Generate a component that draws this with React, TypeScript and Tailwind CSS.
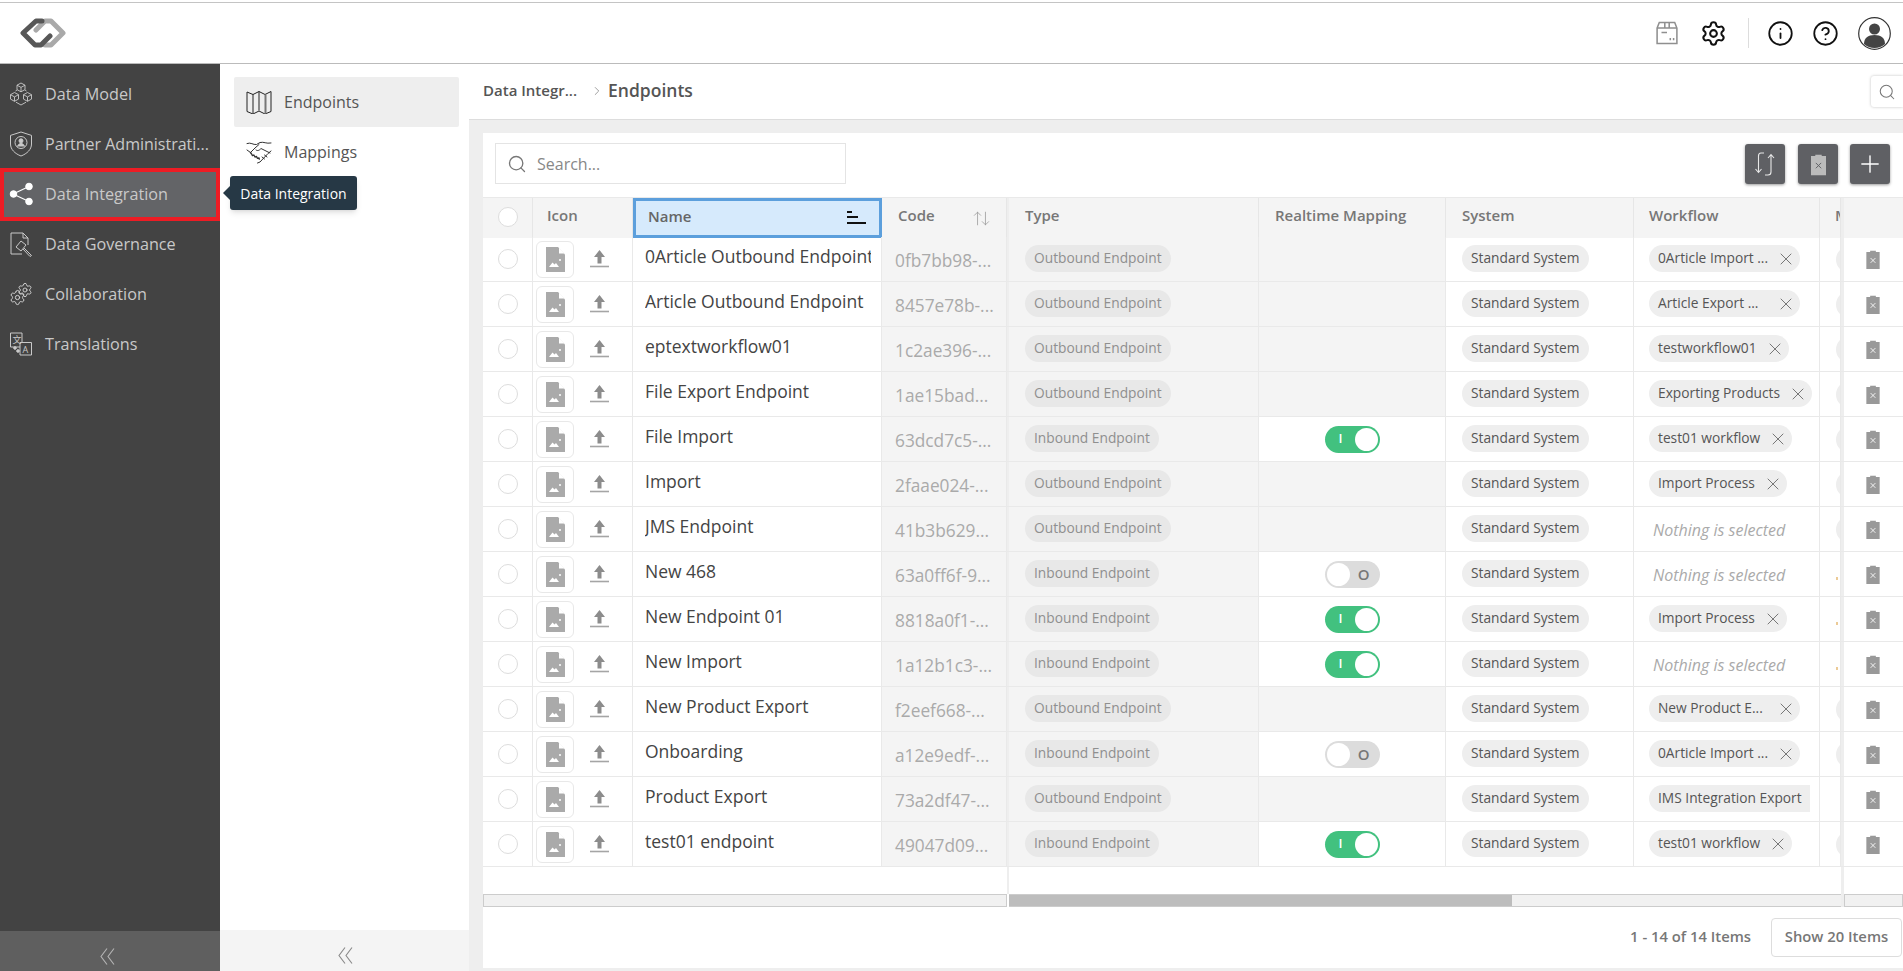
import { ArrowUpDown, ChevronRight, CircleHelp, Info, Plus, Search, Settings, X } from "lucide-react";

interface Row {
  name: string;
  code: string;
  inbound: boolean;
  toggle?: boolean;
  workflow: string | null;
  edge: "chip" | "mark" | "none";
}

const rows: Row[] = [
  { name: "0Article Outbound Endpoint", code: "0fb7bb98-...", inbound: false, workflow: "0Article Import ...", edge: "chip" },
  { name: "Article Outbound Endpoint", code: "8457e78b-...", inbound: false, workflow: "Article Export ...", edge: "chip" },
  { name: "eptextworkflow01", code: "1c2ae396-...", inbound: false, workflow: "testworkflow01", edge: "chip" },
  { name: "File Export Endpoint", code: "1ae15bad...", inbound: false, workflow: "Exporting Products", edge: "chip" },
  { name: "File Import", code: "63dcd7c5-...", inbound: true, toggle: true, workflow: "test01 workflow", edge: "chip" },
  { name: "Import", code: "2faae024-...", inbound: false, workflow: "Import Process", edge: "chip" },
  { name: "JMS Endpoint", code: "41b3b629...", inbound: false, workflow: null, edge: "chip" },
  { name: "New 468", code: "63a0ff6f-9...", inbound: true, toggle: false, workflow: null, edge: "mark" },
  { name: "New Endpoint 01", code: "8818a0f1-...", inbound: true, toggle: true, workflow: "Import Process", edge: "mark" },
  { name: "New Import", code: "1a12b1c3-...", inbound: true, toggle: true, workflow: null, edge: "mark" },
  { name: "New Product Export", code: "f2eef668-...", inbound: false, workflow: "New Product E...", edge: "chip" },
  { name: "Onboarding", code: "a12e9edf-...", inbound: true, toggle: false, workflow: "0Article Import ...", edge: "chip" },
  { name: "Product Export", code: "73a2df47-...", inbound: false, workflow: "IMS Integration Export", edge: "none" },
  { name: "test01 endpoint", code: "49047d09...", inbound: true, toggle: true, workflow: "test01 workflow", edge: "chip" },
];

function Logo() {
  return (
    <svg width="46" height="32" viewBox="0 0 46 32" fill="none" strokeWidth="5" strokeLinejoin="round" strokeLinecap="round">
      <path d="M16 13L25 4h6l12 12-12 12h-6" stroke="#a9a9a9" />
      <path d="M22 4h-6L3 16l12 12h6l9-9" stroke="#575757" />
    </svg>
  );
}

function CubesIcon() {
  return (
    <svg width="24" height="24" viewBox="0 0 24 24" fill="none" stroke="#c9c9c9" strokeWidth="0.9" strokeLinejoin="round">
      <path d="M12 1l4 2.200v4.400l-4 2.200-4-2.200V3.200zM8 3.200l4 2.200 4-2.200M12 5.400v4.400" />
      <path d="M5.500 10.500l4 2.200v4.400l-4 2.200-4-2.200v-4.400zM1.500 12.700l4 2.200 4-2.200M5.500 14.900v4.400" />
      <path d="M18.500 10.500l4 2.200v4.400l-4 2.200-4-2.200v-4.400zM14.500 12.700l4 2.200 4-2.200M18.500 14.900v4.400" />
      <path d="M7 20.200l5 2.800 5-2.800M6.500 9l1.500-1M17.500 9l-1.500-1" />
    </svg>
  );
}

function ShieldIcon() {
  return (
    <svg width="24" height="26" viewBox="0 0 24 26" fill="none" stroke="#c9c9c9" strokeWidth="1">
      <path d="M12 1l10.500 3.400v8.600c0 5.500-4.500 9.700-10.500 12-6-2.300-10.500-6.500-10.500-12V4.400z" />
      <circle cx="12" cy="11.500" r="6" />
      <circle cx="12" cy="9.800" r="2" fill="#c9c9c9" />
      <path d="M8.500 15.500c.5-2 2-3 3.500-3s3 1 3.500 3" fill="#c9c9c9" />
    </svg>
  );
}

function ShareIcon() {
  return (
    <svg width="24" height="24" viewBox="0 0 24 24" fill="#ffffff" stroke="#ffffff">
      <path d="M4 12L20 4.500M4 12l16 7.500" fill="none" strokeWidth="1.200" />
      <circle cx="4.500" cy="12" r="3.300" />
      <circle cx="20" cy="4.500" r="3.300" />
      <circle cx="20" cy="19.500" r="3.300" />
    </svg>
  );
}

function GavelDocIcon() {
  return (
    <svg width="24" height="25" viewBox="0 0 24 25" fill="none" stroke="#c9c9c9" strokeWidth="1">
      <path d="M13 22H2V1h12l5 5v7M14 1v5h5" />
      <path d="M7 15l5-6 5 4-5 6zM15 16l7.500 7.500-1.500 1-7-7.500" />
    </svg>
  );
}

function GearsIcon() {
  return (
    <div className="relative h-[24px] w-[24px] text-[#d2d2d2]">
      <Settings className="absolute bottom-0 left-0 h-[17px] w-[17px]" strokeWidth={1.4} />
      <Settings className="absolute right-0 top-0 h-[16px] w-[16px]" strokeWidth={1.4} />
    </div>
  );
}

function TranslateIcon() {
  return (
    <svg width="24" height="24" viewBox="0 0 24 24" fill="none" stroke="#c9c9c9" strokeWidth="1">
      <path d="M12 15H1.500V1H13v9" />
      <path d="M11 10.500h11.500V23H11z" fill="#434343" />
      <text x="3.500" y="11" fontSize="9" fill="#c9c9c9" stroke="none" fontFamily="'Noto Sans CJK SC', sans-serif">文</text>
      <text x="13.500" y="20.500" fontSize="9" fill="#c9c9c9" stroke="none" fontFamily="'Open Sans', sans-serif">A</text>
      <circle cx="6" cy="16" r="1.300" fill="#c9c9c9" />
      <circle cx="9" cy="19" r="1.300" fill="#c9c9c9" />
    </svg>
  );
}

function FoldedMapIcon() {
  return (
    <svg width="26" height="24" viewBox="0 0 26 24" fill="none" stroke="#222222" strokeWidth="1">
      <path d="M1 2l6 2.500 6-3 6 3 6-3v20l-6 2.500-6-3-6 3-6-2.500z" />
      <path d="M7 4.500v19M13 1.500v19" />
      <path d="M19.500 4.500v19" stroke="#777777" strokeWidth="2" />
    </svg>
  );
}

function HandshakeIcon() {
  return (
    <svg width="26" height="23" viewBox="0 0 26 23" fill="none" stroke="#333333" strokeWidth="1" strokeLinejoin="round" strokeLinecap="round">
      <path d="M1 2.500C5 1 7 4 10.500 3.500L14 1.500c4-1 6 1.500 11 .5" />
      <path d="M1 9l3.500 2.500L9 7l4-3.500M10 9c2 1.500 3.500 0 5-1.500L24 12" />
      <path d="M25 10l-3 2.500-8 8.500-2.500 1" />
      <path d="M4.500 11.500l2 3 1.500-.5 1 2 1.500-.5 1 2 1.500-.5.500 2" strokeDasharray="2 1" strokeWidth="1.400" />
      <path d="M16 16l2.500 2M18.500 14l2.500 2" />
    </svg>
  );
}

function FileImageIcon() {
  return (
    <svg width="19" height="25" viewBox="0 0 19 25" fill="#aaaaaa">
      <path d="M0 0h12l7 7.500V25H0z" />
      <path d="M13 0.500l5.500 6H13z" fill="#ffffff" />
      <path d="M3 20l3.500-4.500 2 2 1.500-1.500 3 4z" fill="#ffffff" />
      <circle cx="14" cy="13" r="1" fill="#ffffff" />
    </svg>
  );
}

function UploadIcon() {
  return (
    <svg width="19" height="18" viewBox="0 0 19 18">
      <path d="M9.500 0l5.500 7H11.500v6.500h-4V7H4z" fill="#8c8c8c" />
      <path d="M0 16.500h19" stroke="#a5a5a5" strokeWidth="1.600" />
    </svg>
  );
}

function TrashIcon({ className, x = "#ffffff" }: { className?: string; x?: string }) {
  return (
    <svg className={className} viewBox="0 0 14 20" fill="currentColor">
      <path d="M4 2V.8h6V2h4v18H0V2z" />
      <path d="M4.500 8.500l5 5m0-5l-5 5" stroke={x} strokeWidth="0.9" fill="none" />
    </svg>
  );
}

function SortIcon() {
  return (
    <svg width="19" height="14" viewBox="0 0 19 14" fill="#111111">
      <rect x="0" y="0" width="5" height="2" />
      <rect x="0" y="5" width="11" height="2" />
      <rect x="0" y="11" width="19" height="2" />
    </svg>
  );
}

function DoubleChevron({ color }: { color: string }) {
  return (
    <svg width="17" height="17" viewBox="0 0 17 17" fill="none" stroke={color} strokeWidth="1.100">
      <path d="M8 .5L2 8.500l6 8M15 .5L9 8.500l6 8" />
    </svg>
  );
}

function Toggle({ on }: { on: boolean }) {
  if (on) {
    return (
      <div className="flex h-[27px] w-[55px] items-center justify-between rounded-full bg-[#42c17f] pl-[14px] pr-[2px] text-[13px] font-semibold text-white">
        <span>I</span>
        <span className="h-[23px] w-[23px] rounded-full bg-white" />
      </div>
    );
  }
  return (
    <div className="flex h-[27px] w-[55px] items-center justify-between rounded-full bg-[#dcdcdc] pl-[2px] pr-[10px] text-[15px] font-semibold text-[#777777]">
      <span className="h-[23px] w-[23px] rounded-full bg-white" />
      <span>O</span>
    </div>
  );
}

const cols = "grid grid-cols-[50px_100px_249px_125px_2px_250px_187px_188px_186px_21px_3px_1fr]";

function TableHead() {
  const head = "flex h-full items-center border-r border-[#e6e6e6] bg-[#f4f4f4] text-[15px] font-semibold text-[#777777]";
  const label = "pb-[5px]";
  return (
    <div className={`${cols} h-[40px] border-y border-[#e9e9e9]`}>
      <div className={`${head} pl-[15px]`}>
        <span className="mb-[3px] h-[20px] w-[20px] rounded-full border border-[#dddddd] bg-white" />
      </div>
      <div className={`${head} pl-[14px]`}><span className={label}>Icon</span></div>
      <div className="flex h-[40px] items-center justify-between border-[3px] border-[#5c9fdc] bg-[#d6eafc] pl-[12px] pr-[13px] text-[15px] font-semibold text-[#666666]">
        <span className="pb-[4px]">Name</span>
        <SortIcon />
      </div>
      <div className={`${head} justify-between pl-[16px] pr-[15px]`}>
        <span className={label}>Code</span>
        <ArrowUpDown className="h-[19px] w-[19px] text-[#999999]" strokeWidth={1} />
      </div>
      <div className="bg-[#eeeeee]" />
      <div className={`${head} pl-[16px]`}><span className={label}>Type</span></div>
      <div className={`${head} pl-[16px]`}><span className={label}>Realtime Mapping</span></div>
      <div className={`${head} pl-[16px]`}><span className={label}>System</span></div>
      <div className={`${head} pl-[15px]`}><span className={label}>Workflow</span></div>
      <div className={`${head} overflow-hidden pl-[15px]`}><span className={label}>M</span></div>
      <div className="bg-[#eeeeee]" />
      <div className="bg-[#f4f4f4]" />
    </div>
  );
}

function WorkflowCell({ row }: { row: Row }) {
  if (!row.workflow) {
    return <span className="mt-[3px] pl-[4px] text-[16px] italic text-[#aaaaaa]">Nothing is selected</span>;
  }
  if (row.edge === "none") {
    return (
      <span className="flex h-[27px] w-[161px] items-center overflow-hidden whitespace-nowrap rounded-l-full bg-[#eeeeee] pl-[9px] text-[13.75px] text-[#555555]">
        {row.workflow}
      </span>
    );
  }
  return (
    <span className="flex h-[27px] items-center gap-[8px] whitespace-nowrap rounded-full bg-[#eeeeee] pl-[9px] pr-[4px] text-[13.75px] text-[#555555]">
      <span className={row.workflow.endsWith("...") ? "w-[110px]" : ""}>{row.workflow}</span>
      <X className="h-[20px] w-[20px] text-[#777777]" strokeWidth={1.2} />
    </span>
  );
}

function TableRow({ row }: { row: Row }) {
  const cell = "flex h-full min-w-0 items-center border-r border-[#e9e9e9]";
  return (
    <div className={`${cols} h-[45px] border-b border-[#e9e9e9]`}>
      <div className={`${cell} pl-[15px]`}>
        <span className="h-[20px] w-[20px] rounded-full border border-[#dddddd] bg-white" />
      </div>
      <div className={`${cell} pl-[3px]`}>
        <div className="flex h-[37px] w-[38px] items-center justify-center rounded-md border border-[#e8e8e8]">
          <FileImageIcon />
        </div>
        <div className="ml-[16px]">
          <UploadIcon />
        </div>
      </div>
      <div className={`${cell} pb-[5px] pl-[12px]`}>
        <span className="w-[226px] overflow-hidden whitespace-nowrap text-[17.5px] text-[#444444]">{row.name}</span>
      </div>
      <div className={`${cell} bg-[#f4f4f4] pl-[13px] pt-[4px] text-[17.3px] text-[#aaaaaa]`}>{row.code}</div>
      <div className="bg-[#eeeeee]" />
      <div className={`${cell} bg-[#f4f4f4] pb-px pl-[16px]`}>
        <span className="flex h-[27px] items-center whitespace-nowrap rounded-full bg-[#e8e8e8] px-[9px] text-[13.75px] text-[#8f8f8f]">
          {row.inbound ? "Inbound Endpoint" : "Outbound Endpoint"}
        </span>
      </div>
      <div className={`${cell} justify-center ${row.inbound ? "bg-white" : "bg-[#f4f4f4]"}`}>
        {row.inbound && <Toggle on={!!row.toggle} />}
      </div>
      <div className={`${cell} pb-px pl-[16px]`}>
        <span className="flex h-[27px] items-center whitespace-nowrap rounded-full bg-[#eeeeee] px-[9px] text-[13.75px] text-[#555555]">
          Standard System
        </span>
      </div>
      <div className={`${cell} pb-px pl-[15px]`}>
        <WorkflowCell row={row} />
      </div>
      <div className={`${cell} overflow-hidden pl-[16px]`}>
        {row.edge === "chip" && <span className="h-[27px] w-[20px] shrink-0 rounded-l-full bg-[#eeeeee]" />}
        {row.edge === "mark" && <span className="mt-[8px] h-[3px] w-[2px] shrink-0 bg-[#eccb97]" />}
      </div>
      <div className="bg-[#eeeeee]" />
      <div className="flex h-full items-center pl-[22px]">
        <TrashIcon className="h-[19px] w-[14px] text-[#999999]" />
      </div>
    </div>
  );
}

export default function App() {
  const lowerItems = [
    { label: "Data Governance", icon: <GavelDocIcon /> },
    { label: "Collaboration", icon: <GearsIcon /> },
    { label: "Translations", icon: <TranslateIcon /> },
  ];

  return (
    <div className="flex h-screen w-full flex-col overflow-hidden bg-white font-['Open_Sans',sans-serif]">
      <div className="h-[2px] bg-white" />
      <header className="flex h-[62px] shrink-0 items-center justify-between border-y border-t-[#c4c4c4] border-b-[#bbbbbb] pl-[20px] pr-[12px]">
        <Logo />
        <div className="flex items-center">
          <svg width="22" height="24" viewBox="0 0 20 21" fill="none" stroke="#8f8f8f" strokeWidth="1.400">
            <path d="M1 6l2-5h14l2 5v14H1zM1 6h18M8 1v5M12 1v5M5 10h5" />
            <path d="M13 15v2M16 15v2" />
          </svg>
          <Settings className="ml-[22px] h-[27px] w-[27px] text-[#111111]" strokeWidth={1.8} />
          <div className="ml-[21px] h-[30px] w-px bg-[#dddddd]" />
          <Info className="ml-[18px] h-[27px] w-[27px] text-[#111111]" strokeWidth={1.6} />
          <CircleHelp className="ml-[18px] h-[27px] w-[27px] text-[#111111]" strokeWidth={1.6} />
          <svg className="ml-[19px]" width="33" height="33" viewBox="0 0 33 33">
            <circle cx="16.500" cy="16.500" r="15.800" fill="none" stroke="#333333" strokeWidth="1.200" />
            <circle cx="16.500" cy="12" r="5.500" fill="#444444" />
            <path d="M6 27c0-6 4-9 10.500-9S27 21 27 27c-3 2.500-6.500 4-10.500 4S9 29.500 6 27z" fill="#444444" />
          </svg>
        </div>
      </header>

      <div className="flex min-h-0 flex-1">
        <aside className="flex w-[220px] shrink-0 flex-col justify-between bg-[#434343]">
          <nav className="pt-[5px] text-[16.2px] text-[#c9c9c9]">
            <div className="flex h-[50px] items-center gap-[12px] pl-[9px]">
              <CubesIcon />
              Data Model
            </div>
            <div className="flex h-[50px] items-center gap-[12px] whitespace-nowrap pl-[9px] text-[16px]">
              <ShieldIcon />
              Partner Administrati...
            </div>
            <div className="relative flex h-[50px] items-center gap-[12px] bg-[#636467] pl-[9px]">
              <ShareIcon />
              Data Integration
              <div className="absolute -top-px left-0 h-[53px] w-full border-4 border-[#ed1c24]" />
              <div className="absolute left-[230px] top-[7px] z-10 flex h-[34px] w-[127px] items-center justify-center rounded-[3px] bg-[#263845] text-[14px] font-medium text-white shadow-md">
                <span className="absolute -left-[7px] top-[10px] h-0 w-0 border-y-[7px] border-r-[7px] border-y-transparent border-r-[#263845]" />
                Data Integration
              </div>
            </div>
            {lowerItems.map((item) => (
              <div key={item.label} className="flex h-[50px] items-center gap-[12px] pl-[9px]">
                {item.icon}
                {item.label}
              </div>
            ))}
          </nav>
          <div className="flex h-[40px] items-center justify-center bg-[#5f5f5f] pr-[5px] pt-[10px]">
            <DoubleChevron color="#b5b5b5" />
          </div>
        </aside>

        <aside className="flex w-[249px] shrink-0 flex-col justify-between bg-white">
          <div className="px-[14px] pt-[13px] text-[16px] text-[#555555]">
            <div className="flex h-[50px] w-[225px] items-center gap-[12px] rounded-[2px] bg-[#eeeeee] pl-[12px]">
              <FoldedMapIcon />
              Endpoints
            </div>
            <div className="flex h-[50px] items-center gap-[12px] pl-[12px]">
              <HandshakeIcon />
              Mappings
            </div>
          </div>
          <div className="flex h-[41px] items-center justify-center bg-[#f4f4f4] pl-[2px] pt-[10px]">
            <DoubleChevron color="#888888" />
          </div>
        </aside>

        <main className="flex min-w-0 flex-1 flex-col bg-[#eeeeee]">
          <div className="flex h-[56px] shrink-0 items-center justify-between border-b border-[#dddddd] bg-white pl-[14px]">
            <div className="flex items-center pb-[2px] text-[#555555]">
              <span className="text-[15px] font-semibold">Data Integr...</span>
              <ChevronRight className="ml-[13px] h-[14px] w-[14px] text-[#777777]" strokeWidth={1.2} />
              <span className="ml-[4px] text-[17.5px] font-semibold">Endpoints</span>
            </div>
            <div className="flex h-[31px] w-[32px] items-center justify-center rounded-l-[3px] bg-white shadow-[0_0_3px_rgba(0,0,0,0.25)]">
              <Search className="h-[18px] w-[18px] text-[#777777]" strokeWidth={1.4} />
            </div>
          </div>

          <div className="mb-[3px] ml-[14px] mt-[13px] flex min-h-0 flex-1 flex-col bg-white">
            <div className="flex h-[64px] shrink-0 items-start justify-between pl-[12px] pr-[13px] pt-[10px]">
              <div className="flex h-[41px] w-[351px] items-center gap-[10px] border border-[#e4e4e4] pl-[11px] text-[16px] text-[#888888]">
                <Search className="h-[20px] w-[20px] text-[#777777]" strokeWidth={1.6} />
                Search...
              </div>
              <div className="flex pt-px">
                <div className="flex h-[40px] w-[40px] items-center justify-center rounded-[3px] bg-[#5f6064] shadow-[0_1px_3px_rgba(0,0,0,0.4)]">
                  <svg width="20" height="26" viewBox="0 0 20 26" fill="none" stroke="#e8e8e8" strokeWidth="1.100">
                    <path d="M9 2H6C4 2 3.500 3.500 3.500 5v16M.5 18l3 3.500 3-3.500" />
                    <path d="M16 7l-3-3.500L10 7M13 3.500V21c0 1.500-1 3-3 3H7" transform="translate(3 0)" />
                  </svg>
                </div>
                <div className="ml-[13px] flex h-[40px] w-[40px] items-center justify-center rounded-[3px] bg-[#5f6064] shadow-[0_1px_3px_rgba(0,0,0,0.4)]">
                  <TrashIcon className="h-[25px] w-[15px] text-[#bbbbbb]" x="#5f6064" />
                </div>
                <div className="ml-[12px] flex h-[40px] w-[40px] items-center justify-center rounded-[3px] bg-[#5f6064] shadow-[0_1px_3px_rgba(0,0,0,0.4)]">
                  <Plus className="h-[28px] w-[28px] text-white" strokeWidth={1.2} />
                </div>
              </div>
            </div>

            <TableHead />
            {rows.map((row) => (
              <TableRow key={row.name} row={row} />
            ))}

            <div className={`${cols} h-[27px] shrink-0`}>
              <div className="col-span-4" />
              <div className="bg-[#eeeeee]" />
              <div className="col-span-5" />
              <div className="bg-[#eeeeee]" />
            </div>

            <div className={`${cols} h-[13px] shrink-0`}>
              <div className="col-span-4 border border-[#cccccc] bg-[#f1f1f1]" />
              <div className="bg-white" />
              <div className="col-span-5 flex border-y border-[#cccccc] bg-[#f1f1f1]">
                <div className="w-[503px] bg-[#bdbdbd]" />
              </div>
              <div className="bg-[#eeeeee]" />
              <div className="border border-[#cccccc] bg-[#f1f1f1]" />
            </div>

            <div className="flex flex-1 items-center justify-end pr-px text-[14.8px] font-semibold text-[#777777]">
              <span className="mb-[2px] mr-[20px]">1 - 14 of 14 Items</span>
              <div className="flex h-[39px] w-[131px] items-center justify-center rounded-[4px] border border-[#dddddd] pb-[2px]">
                Show 20 Items
              </div>
            </div>
          </div>
        </main>
      </div>
    </div>
  );
}
